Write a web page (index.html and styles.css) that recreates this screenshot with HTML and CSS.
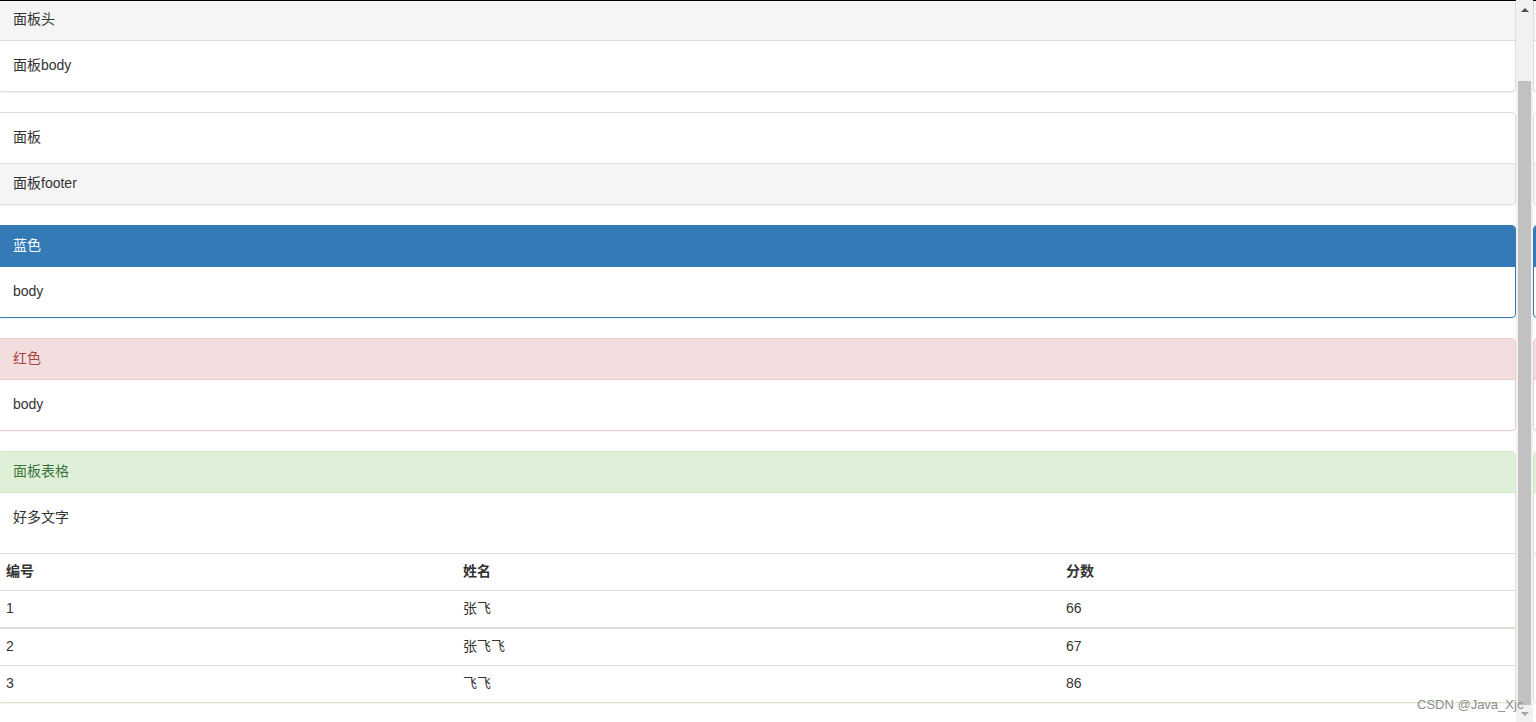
FILE: index.html
```html
<!DOCTYPE html>
<html lang="zh-CN">
<head>
<meta charset="utf-8">
<title>面板</title>
<link rel="stylesheet" href="styles.css">
</head>
<body>
<div class="frame">
  <div class="main">
    <div class="stack">
      <div class="panel panel-default">
        <div class="panel-heading">面板头</div>
        <div class="panel-body">面板body</div>
      </div>
      <div class="panel panel-default">
        <div class="panel-body">面板</div>
        <div class="panel-footer">面板footer</div>
      </div>
      <div class="panel panel-primary">
        <div class="panel-heading">蓝色</div>
        <div class="panel-body">body</div>
      </div>
      <div class="panel panel-danger">
        <div class="panel-heading">红色</div>
        <div class="panel-body">body</div>
      </div>
      <div class="panel panel-success">
        <div class="panel-heading">面板表格</div>
        <div class="panel-body"><p>好多文字</p></div>
        <table class="table">
          <colgroup>
            <col class="col-a">
            <col class="col-b">
            <col class="col-c">
          </colgroup>
          <tbody>
            <tr><th>编号</th><th>姓名</th><th>分数</th></tr>
            <tr><td>1</td><td>张飞</td><td>66</td></tr>
          </tbody>
          <tbody>
            <tr><td>2</td><td>张飞飞</td><td>67</td></tr>
            <tr><td>3</td><td>飞飞</td><td>86</td></tr>
          </tbody>
        </table>
      </div>
    </div>
  </div>

  <div class="scrollbar">
    <div class="sb-btn"><span class="arrow-up"></span></div>
    <div class="sb-track"><div class="sb-thumb"></div></div>
    <div class="sb-btn"><span class="arrow-down"></span></div>
  </div>

  <div class="side" aria-hidden="true">
    <div class="stack side-stack">
      <div class="panel panel-default">
        <div class="panel-heading stub"></div>
        <div class="panel-body stub"></div>
      </div>
      <div class="panel panel-default">
        <div class="panel-body stub"></div>
        <div class="panel-footer stub"></div>
      </div>
      <div class="panel panel-primary">
        <div class="panel-heading stub"></div>
        <div class="panel-body stub"></div>
      </div>
      <div class="panel panel-danger">
        <div class="panel-heading stub"></div>
        <div class="panel-body stub"></div>
      </div>
      <div class="panel panel-success">
        <div class="panel-heading stub"></div>
        <div class="panel-body stub tall"></div>
        <div class="table-stub"></div>
      </div>
    </div>
  </div>

  <div class="watermark">CSDN @Java_Xjc</div>
</div>
</body>
</html>
```

FILE: styles.css
```css
* {
  box-sizing: border-box;
}

html, body {
  margin: 0;
  padding: 0;
  height: 722px;
  overflow: hidden;
  background: #fff;
}

body {
  font-family: "Liberation Sans", Arial, "Noto Sans CJK SC", sans-serif;
  font-size: 14px;
  line-height: 20px;
  color: #333;
}

.frame {
  position: relative;
  display: flex;
  height: 722px;
}

.main {
  width: 1516px;
  flex: 0 0 1516px;
  overflow: hidden;
  border-top: 1px solid #000;
}

.stack {
  margin-left: -3px;
  margin-top: -2px;
  width: 1519px;
}

.side {
  flex: 1 1 auto;
  overflow: hidden;
  border-top: 1px solid #000;
}

.side-stack {
  margin-left: 0;
  width: 400px;
}

/* panels */
.panel {
  margin-bottom: 20px;
  background: #fff;
  border: 1px solid transparent;
  border-radius: 4px;
  box-shadow: 0 1px 1px rgba(0, 0, 0, 0.05);
}

.panel-heading {
  padding: 9px 15px 11px;
  height: 41px;
  border-bottom: 1px solid transparent;
  border-top-left-radius: 3px;
  border-top-right-radius: 3px;
}

.panel-body {
  padding: 14px 15px 16px;
}

.panel-body p {
  margin: 0 0 10px;
}

.panel-footer {
  padding: 9px 15px 11px;
  background: #f5f5f5;
  border-top: 1px solid #ddd;
  border-bottom-left-radius: 3px;
  border-bottom-right-radius: 3px;
}

.panel-heading.stub {
  height: 41px;
}

.panel-body.stub {
  height: 50px;
}

.panel-body.stub.tall {
  height: 60px;
}

.panel-footer.stub {
  height: 41px;
}

.table-stub {
  height: 149px;
  border-top: 1px solid #ddd;
}

.panel-default {
  border-color: #ddd;
}

.panel-default > .panel-heading {
  color: #333;
  background: #f5f5f5;
  border-color: #ddd;
}

.panel-primary {
  border-color: #337ab7;
}

.panel-primary > .panel-heading {
  color: #fff;
  background: #337ab7;
  border-color: #337ab7;
}

.panel-danger {
  border-color: #ebccd1;
}

.panel-danger > .panel-heading {
  color: #a94442;
  background: #f2dede;
  border-color: #ebccd1;
}

.panel-success {
  border-color: #d6e9c6;
}

.panel-success > .panel-heading {
  color: #3c763d;
  background: #dff0d8;
  border-color: #d6e9c6;
}

/* table */
.table {
  width: 100%;
  table-layout: fixed;
  border-collapse: collapse;
  border-spacing: 0;
  margin: 0;
}

.panel-body + .table {
  border-top: 1px solid #ddd;
}

.col-a {
  width: 457px;
}

.col-b {
  width: 603px;
}

.col-c {
  width: 457px;
}

.table th,
.table td {
  padding: 7px 8px 9px;
  line-height: 20px;
  text-align: left;
  vertical-align: top;
  border-top: 1px solid #ddd;
}

.table th {
  font-weight: bold;
}

.table > tbody:first-child > tr:first-child > th,
.table > tbody:first-child > tr:first-child > td {
  border-top: 0;
}

.table > tbody + tbody {
  border-top: 2px solid #ddd;
}

/* fake scrollbar */
.scrollbar {
  flex: 0 0 17px;
  width: 17px;
  display: flex;
  flex-direction: column;
  background: #f1f1f1;
}

.sb-btn {
  height: 17px;
  flex: 0 0 17px;
  display: flex;
  align-items: center;
  justify-content: center;
}

.arrow-up {
  width: 0;
  height: 0;
  border-left: 4px solid transparent;
  border-right: 4px solid transparent;
  border-bottom: 4px solid #505050;
  margin-top: 2px;
}

.arrow-down {
  width: 0;
  height: 0;
  border-left: 4px solid transparent;
  border-right: 4px solid transparent;
  border-top: 4px solid #a3a3a3;
}

.sb-track {
  flex: 1 1 auto;
  display: flex;
  flex-direction: column;
  padding: 64px 2px 0;
}

.sb-thumb {
  flex: 1 1 auto;
  background: #c1c1c1;
}

/* watermark overlay */
.watermark {
  position: absolute;
  left: 1417px;
  top: 697px;
  font-family: "Liberation Sans", Arial, sans-serif;
  font-size: 13px;
  line-height: 16px;
  color: #8c8c8c;
  white-space: nowrap;
}
```
